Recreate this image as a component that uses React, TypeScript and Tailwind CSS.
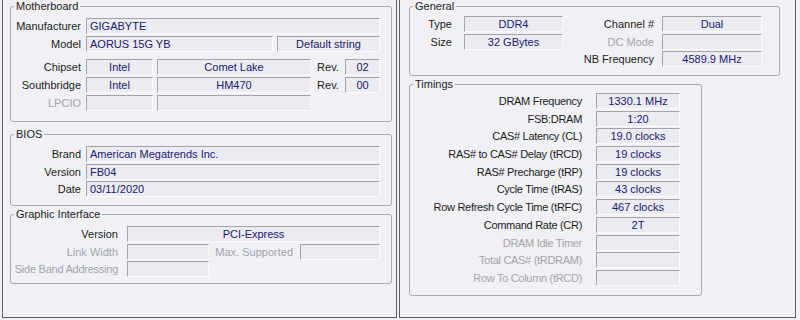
import type { ReactNode } from 'react';

// CPU-Z style readout: Mainboard tab on the left, Memory tab on the right

const box = 'rounded-[3px] border border-[#a9a9b0] pl-0';
const dark = 'text-[#1c1c1c]';
const dim = 'text-[#a4a4aa]';

function Field({ className = '', left = false, children }: { className?: string; left?: boolean; children?: ReactNode }) {
  return (
    <div
      className={`h-4 shrink-0 truncate border border-t-[#a3a3ab] border-l-[#a3a3ab] border-b-[#fbfbfd] border-r-[#fbfbfd] bg-[#ebebf1] leading-[14px] text-[#20206e] ${
        left ? 'pl-[3px] text-left' : 'text-center'
      } ${className}`}
    >
      {children}
    </div>
  );
}

function Lbl({ className = '', off = false, children }: { className?: string; off?: boolean; children: ReactNode }) {
  return <div className={`shrink-0 whitespace-nowrap text-right leading-4 ${off ? dim : dark} ${className}`}>{children}</div>;
}

function Legend({ children }: { children: ReactNode }) {
  return <legend className={`ml-[3px] px-[2px] leading-[13px] ${dark}`}>{children}</legend>;
}

const timings: [string, string, boolean][] = [
  ['DRAM Frequency', '1330.1 MHz', false],
  ['FSB:DRAM', '1:20', false],
  ['CAS# Latency (CL)', '19.0 clocks', false],
  ['RAS# to CAS# Delay (tRCD)', '19 clocks', false],
  ['RAS# Precharge (tRP)', '19 clocks', false],
  ['Cycle Time (tRAS)', '43 clocks', false],
  ['Row Refresh Cycle Time (tRFC)', '467 clocks', false],
  ['Command Rate (CR)', '2T', false],
  ['DRAM Idle Timer', '', true],
  ['Total CAS# (tRDRAM)', '', true],
  ['Row To Column (tRCD)', '', true],
];

export default function App() {
  return (
    <div className="flex h-[320px] w-[800px] bg-[#f0f0f5] font-['Liberation_Sans',Arial,sans-serif] text-[11px]">
      {/* Mainboard */}
      <div className="ml-[2px] flex h-[318px] w-[395px] flex-col border-x border-b border-[#5f5f66] pl-[7px] pr-[4px]">
        <fieldset className={`${box} pb-[10px] pr-[10px] pt-[5px]`}>
          <Legend>Motherboard</Legend>
          <div className="flex flex-col gap-[2px]">
            <div className="flex items-center">
              <Lbl className="w-[70px]">Manufacturer</Lbl>
              <Field left className="ml-[5px] w-[294px]">GIGABYTE</Field>
            </div>
            <div className="flex items-center">
              <Lbl className="w-[70px]">Model</Lbl>
              <Field left className="ml-[5px] w-[187px]">AORUS 15G YB</Field>
              <Field className="ml-[4px] w-[103px]">Default string</Field>
            </div>
          </div>
          <div className="mt-[7px] flex flex-col gap-[2px]">
            <div className="flex items-center">
              <Lbl className="w-[70px]">Chipset</Lbl>
              <Field className="ml-[5px] w-[67px]">Intel</Field>
              <Field className="ml-[4px] w-[154px]">Comet Lake</Field>
              <Lbl className="w-[34px] !text-center">Rev.</Lbl>
              <Field className="w-[35px]">02</Field>
            </div>
            <div className="flex items-center">
              <Lbl className="w-[70px]">Southbridge</Lbl>
              <Field className="ml-[5px] w-[67px]">Intel</Field>
              <Field className="ml-[4px] w-[154px]">HM470</Field>
              <Lbl className="w-[34px] !text-center">Rev.</Lbl>
              <Field className="w-[35px]">00</Field>
            </div>
            <div className="flex items-center">
              <Lbl off className="w-[70px]">LPCIO</Lbl>
              <Field className="ml-[5px] w-[67px]" />
              <Field className="ml-[4px] w-[154px]" />
            </div>
          </div>
        </fieldset>

        <fieldset className={`${box} mt-[6px] pb-[8px] pr-[10px] pt-[5px]`}>
          <Legend>BIOS</Legend>
          <div className="flex flex-col gap-[1.5px]">
            <div className="flex items-center">
              <Lbl className="w-[70px]">Brand</Lbl>
              <Field left className="ml-[5px] w-[294px]">American Megatrends Inc.</Field>
            </div>
            <div className="flex items-center">
              <Lbl className="w-[70px]">Version</Lbl>
              <Field left className="ml-[5px] w-[294px]">FB04</Field>
            </div>
            <div className="flex items-center">
              <Lbl className="w-[70px]">Date</Lbl>
              <Field left className="ml-[5px] w-[294px]">03/11/2020</Field>
            </div>
          </div>
        </fieldset>

        <fieldset className={`${box} mt-[2px] pb-[6px] pr-[10px] pt-[5px]`}>
          <Legend>Graphic Interface</Legend>
          <div className="flex flex-col gap-[1.5px]">
            <div className="flex items-center">
              <Lbl className="w-[107px]">Version</Lbl>
              <Field className="ml-[9px] w-[253px]">PCI-Express</Field>
            </div>
            <div className="flex items-center">
              <Lbl off className="w-[107px]">Link Width</Lbl>
              <Field className="ml-[9px] w-[82px]" />
              <Lbl off className="w-[84px]">Max. Supported</Lbl>
              <Field className="ml-[7px] w-[80px]" />
            </div>
            <div className="flex items-center">
              <Lbl off className="w-[107px] tracking-[-0.25px]">Side Band Addressing</Lbl>
              <Field className="ml-[9px] w-[82px]" />
            </div>
          </div>
        </fieldset>
      </div>

      {/* Memory */}
      <div className="ml-[2px] flex h-[318px] w-[397px] flex-col border-x border-b border-[#5f5f66] pl-[9px]">
        <fieldset className={`${box} w-[371px] pb-[8px] pt-[3px]`}>
          <Legend>General</Legend>
          <div className="flex flex-col gap-[1.5px]">
            <div className="flex items-center">
              <Lbl className="w-[42px]">Type</Lbl>
              <Field className="ml-[12px] w-[99px]">DDR4</Field>
              <Lbl className="w-[91px]">Channel #</Lbl>
              <Field className="ml-[8px] w-[100px]">Dual</Field>
            </div>
            <div className="flex items-center">
              <Lbl className="w-[42px]">Size</Lbl>
              <Field className="ml-[12px] w-[99px]">32 GBytes</Field>
              <Lbl off className="w-[91px]">DC Mode</Lbl>
              <Field className="ml-[8px] w-[100px]" />
            </div>
            <div className="flex items-center">
              <Lbl className="w-[244px]">NB Frequency</Lbl>
              <Field className="ml-[8px] w-[100px]">4589.9 MHz</Field>
            </div>
          </div>
        </fieldset>

        <fieldset className={`${box} mt-[1.5px] w-[293px] pb-[9px] pt-[2.5px]`}>
          <Legend>Timings</Legend>
          <div className="flex flex-col gap-[1.7px]">
            {timings.map(([name, value, off]) => (
              <div key={name} className="flex items-center">
                <Lbl off={off} className="w-[172px] tracking-[-0.3px]">{name}</Lbl>
                <Field className="ml-[14px] w-[84px]">{value}</Field>
              </div>
            ))}
          </div>
        </fieldset>
      </div>
    </div>
  );
}
